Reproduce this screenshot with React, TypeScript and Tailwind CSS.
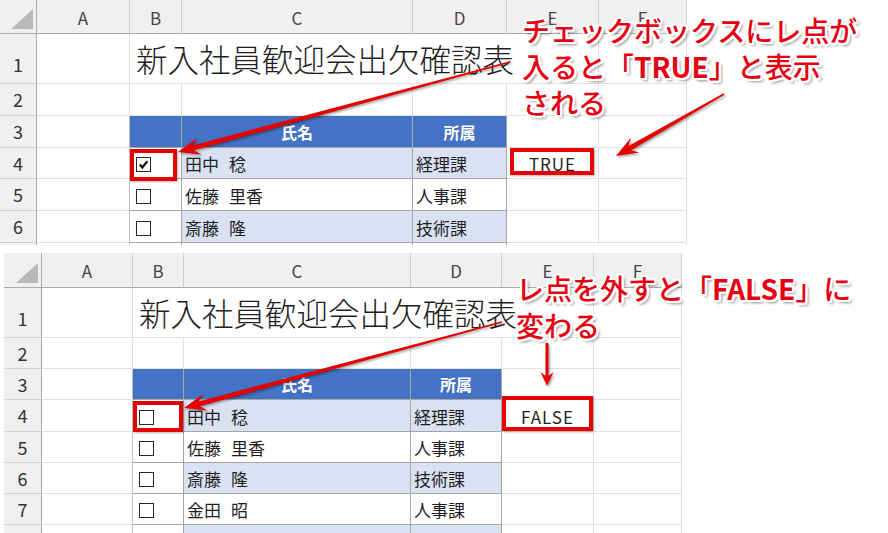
import React from "react";

const JP = "font-['Noto_Sans_CJK_JP','Noto_Sans',sans-serif]";

type Emp = { name: string; dept: string };

const employees: Emp[] = [
  { name: "田中　稔", dept: "経理課" },
  { name: "佐藤　里香", dept: "人事課" },
  { name: "斎藤　隆", dept: "技術課" },
  { name: "金田　昭", dept: "人事課" },
];

const letters = ["A", "B", "C", "D", "E", "F"];

const grid = "border-r border-b border-[#e1e1e1]";
const colHead =
  "bg-[#f0f0f0] border-r border-b border-r-[#cdcdcd] border-b-[#ababab] flex items-center justify-center pt-[2px] text-[17px] text-[#444]";
const rowHead =
  "bg-[#f0f0f0] border-r border-b border-r-[#ababab] border-b-[#d2d2d2] flex justify-center text-[18px] text-[#333]";
const tableLine = "border-r border-b border-[#a6a6a6]";
const outline =
  "[text-shadow:2px_0_0_#fff,-2px_0_0_#fff,0_2px_0_#fff,0_-2px_0_#fff,2px_2px_0_#fff,-2px_-2px_0_#fff,2px_-2px_0_#fff,-2px_2px_0_#fff,3px_3px_3px_rgba(0,0,0,0.45)]";

function CheckBox({ checked }: { checked: boolean }) {
  return (
    <div className="w-[15px] h-[15px] border border-[#262626] bg-white flex items-center justify-center">
      {checked && (
        <svg width="11" height="11" viewBox="0 0 11 11">
          <path d="M1.8 5.6 L4.3 8.4 L9.4 2.3" fill="none" stroke="#111" strokeWidth="2.3" />
        </svg>
      )}
    </div>
  );
}

function Sheet({
  layout,
  checked,
  value,
  dataRows,
}: {
  layout: string;
  checked: boolean;
  value: string;
  dataRows: number;
}) {
  // the last row is only partly visible at the bottom edge, so it stays empty
  const rows: (Emp | null)[] = [...employees.slice(0, dataRows), null];
  return (
    <div className={`grid ${layout} auto-rows-[31px] overflow-hidden`}>
      {/* column headers */}
      <div className="bg-[#f0f0f0] border-r border-b border-r-[#ababab] border-b-[#ababab] relative">
        <svg className="absolute right-[3px] bottom-[4px]" width="22" height="20" viewBox="0 0 22 20">
          <polygon points="22,0 22,20 0,20" fill="#b9b9b9" />
        </svg>
      </div>
      {letters.map((l) => (
        <div key={l} className={colHead}>
          {l}
        </div>
      ))}

      {/* row 1 */}
      <div className={`${rowHead} items-end pb-[5px]`}>1</div>
      <div className={grid} />
      <div className={`col-span-4 ${grid} flex items-end pl-[6px] pb-[9px] text-[31.5px] leading-none font-light whitespace-nowrap text-[#1f1f1f]`}>
        新入社員歓迎会出欠確認表
      </div>
      <div className={grid} />

      {/* row 2 */}
      <div className={`${rowHead} items-center`}>2</div>
      {letters.map((l) => (
        <div key={l} className={grid} />
      ))}

      {/* row 3: table header */}
      <div className={`${rowHead} items-center`}>3</div>
      <div className="border-r border-b border-r-[#bfbfbf] border-b-[#e1e1e1]" />
      <div className={`bg-[#4472c4] ${tableLine}`} />
      <div className={`bg-[#4472c4] ${tableLine} flex items-center justify-center text-[16px] font-bold text-white`}>氏名</div>
      <div className={`bg-[#4472c4] ${tableLine} flex items-center justify-center text-[16px] font-bold text-white`}>所属</div>
      <div className={grid} />
      <div className={grid} />

      {rows.map((e, i) => {
        const stripe = i % 2 === 0 ? "bg-[#d9e1f2]" : "bg-white";
        return (
          <React.Fragment key={i}>
            <div className={`${rowHead} items-center`}>{e ? i + 4 : ""}</div>
            <div className="border-r border-b border-r-[#bfbfbf] border-b-[#e1e1e1]" />
            <div className={`bg-white ${tableLine} flex items-center pl-[6px] pt-[3px]`}>
              {e && <CheckBox checked={checked && i === 0} />}
            </div>
            <div className={`${stripe} ${tableLine} flex items-center gap-[10px] pl-[3px] pt-[2px] text-[17px] text-[#1f1f1f] whitespace-nowrap`}>
              {e && e.name.split("　").map((part) => <span key={part}>{part}</span>)}
            </div>
            <div className={`${stripe} ${tableLine} flex items-center pl-[3px] pt-[2px] text-[17px] text-[#1f1f1f]`}>
              {e ? e.dept : ""}
            </div>
            <div className={`${grid} flex items-center justify-center pt-[2px] text-[17px] tracking-[1px] text-[#1f1f1f]`}>
              {i === 0 ? value : ""}
            </div>
            <div className={grid} />
          </React.Fragment>
        );
      })}
    </div>
  );
}

function arrowPoints(
  x1: number,
  y1: number,
  x2: number,
  y2: number,
  w1: number,
  w2: number,
  hl: number,
  hw: number
) {
  const dx = x2 - x1;
  const dy = y2 - y1;
  const len = Math.hypot(dx, dy);
  const ux = dx / len;
  const uy = dy / len;
  const px = -uy;
  const py = ux;
  const sx = x2 - ux * hl * 0.72;
  const sy = y2 - uy * hl * 0.72;
  const bx = x2 - ux * hl;
  const by = y2 - uy * hl;
  const pts = [
    [x1 + (px * w1) / 2, y1 + (py * w1) / 2],
    [sx + (px * w2) / 2, sy + (py * w2) / 2],
    [bx + (px * hw) / 2, by + (py * hw) / 2],
    [x2, y2],
    [bx - (px * hw) / 2, by - (py * hw) / 2],
    [sx - (px * w2) / 2, sy - (py * w2) / 2],
    [x1 - (px * w1) / 2, y1 - (py * w1) / 2],
  ];
  return pts.map((p) => `${p[0].toFixed(1)},${p[1].toFixed(1)}`).join(" ");
}

const arrows: [number, number, number, number, number, number, number, number][] = [
  [510, 62, 178, 152, 1.5, 5, 22, 17],
  [724, 94, 616, 156, 1.5, 5, 22, 17],
  [502, 322, 184, 408, 1.5, 5, 22, 17],
  [547, 343, 547, 386, 3, 3, 14, 13],
];

export default function App() {
  return (
    <div className={`relative w-[888px] h-[533px] overflow-hidden bg-white ${JP}`}>
      <div className="flex flex-col">
        <div className="w-[687px] h-[245px] overflow-hidden">
          <Sheet
            layout="grid-cols-[37px_93px_52px_231px_94px_92px_88px] grid-rows-[34px_50px_32px_32px_31px_32px_32px_31px]"
            checked={true}
            value="TRUE"
            dataRows={3}
          />
        </div>
        <div className="mt-[8px] ml-[4px] w-[678px] h-[280px] overflow-hidden">
          <Sheet
            layout="grid-cols-[38px_91px_51px_227px_91px_92px_88px] grid-rows-[35px_50px_31px_31px_32px_31px_31px_31px_31px]"
            checked={false}
            value="FALSE"
            dataRows={4}
          />
        </div>
      </div>

      {/* red highlight boxes */}
      <div className="absolute left-[130px] top-[149px] w-[47px] h-[32px] border-[4px] border-[#e60000] shadow-[1px_1px_2px_rgba(0,0,0,0.3)]" />
      <div className="absolute left-[510px] top-[148px] w-[84px] h-[27px] border-[4px] border-[#e60000] shadow-[1px_1px_2px_rgba(0,0,0,0.3)]" />
      <div className="absolute left-[133px] top-[401px] w-[50px] h-[31px] border-[4px] border-[#e60000] shadow-[1px_1px_2px_rgba(0,0,0,0.3)]" />
      <div className="absolute left-[502px] top-[396px] w-[91px] h-[35px] border-[4px] border-[#e60000] shadow-[1px_1px_2px_rgba(0,0,0,0.3)]" />

      {/* arrows */}
      <svg className="absolute left-0 top-0 pointer-events-none" width="888" height="533" viewBox="0 0 888 533">
        <defs>
          <filter id="arrowShadow" x="-5%" y="-5%" width="110%" height="110%">
            <feGaussianBlur stdDeviation="1" />
          </filter>
        </defs>
        {arrows.map((a, i) => (
          <polygon
            key={`s${i}`}
            points={arrowPoints(a[0] + 1.5, a[1] + 1.5, a[2] + 1.5, a[3] + 1.5, a[4], a[5], a[6], a[7])}
            fill="rgba(0,0,0,0.35)"
            filter="url(#arrowShadow)"
          />
        ))}
        {arrows.map((a, i) => (
          <polygon key={`a${i}`} points={arrowPoints(...a)} fill="#e60000" />
        ))}
      </svg>

      {/* callout texts */}
      <div className={`absolute left-[522px] top-[12px] text-[28px] leading-[36px] font-medium text-[#e60012] whitespace-nowrap ${outline}`}>
        <div>チェックボックスにレ点が</div>
        <div>
          入ると「<span className="font-bold">TRUE</span>」と表示
        </div>
        <div>される</div>
      </div>
      <div className={`absolute left-[516px] top-[270px] text-[28px] leading-[37px] font-medium text-[#e60012] whitespace-nowrap ${outline}`}>
        <div>
          レ点を外すと「<span className="font-bold">FALSE</span>」に
        </div>
        <div>変わる</div>
      </div>
    </div>
  );
}
